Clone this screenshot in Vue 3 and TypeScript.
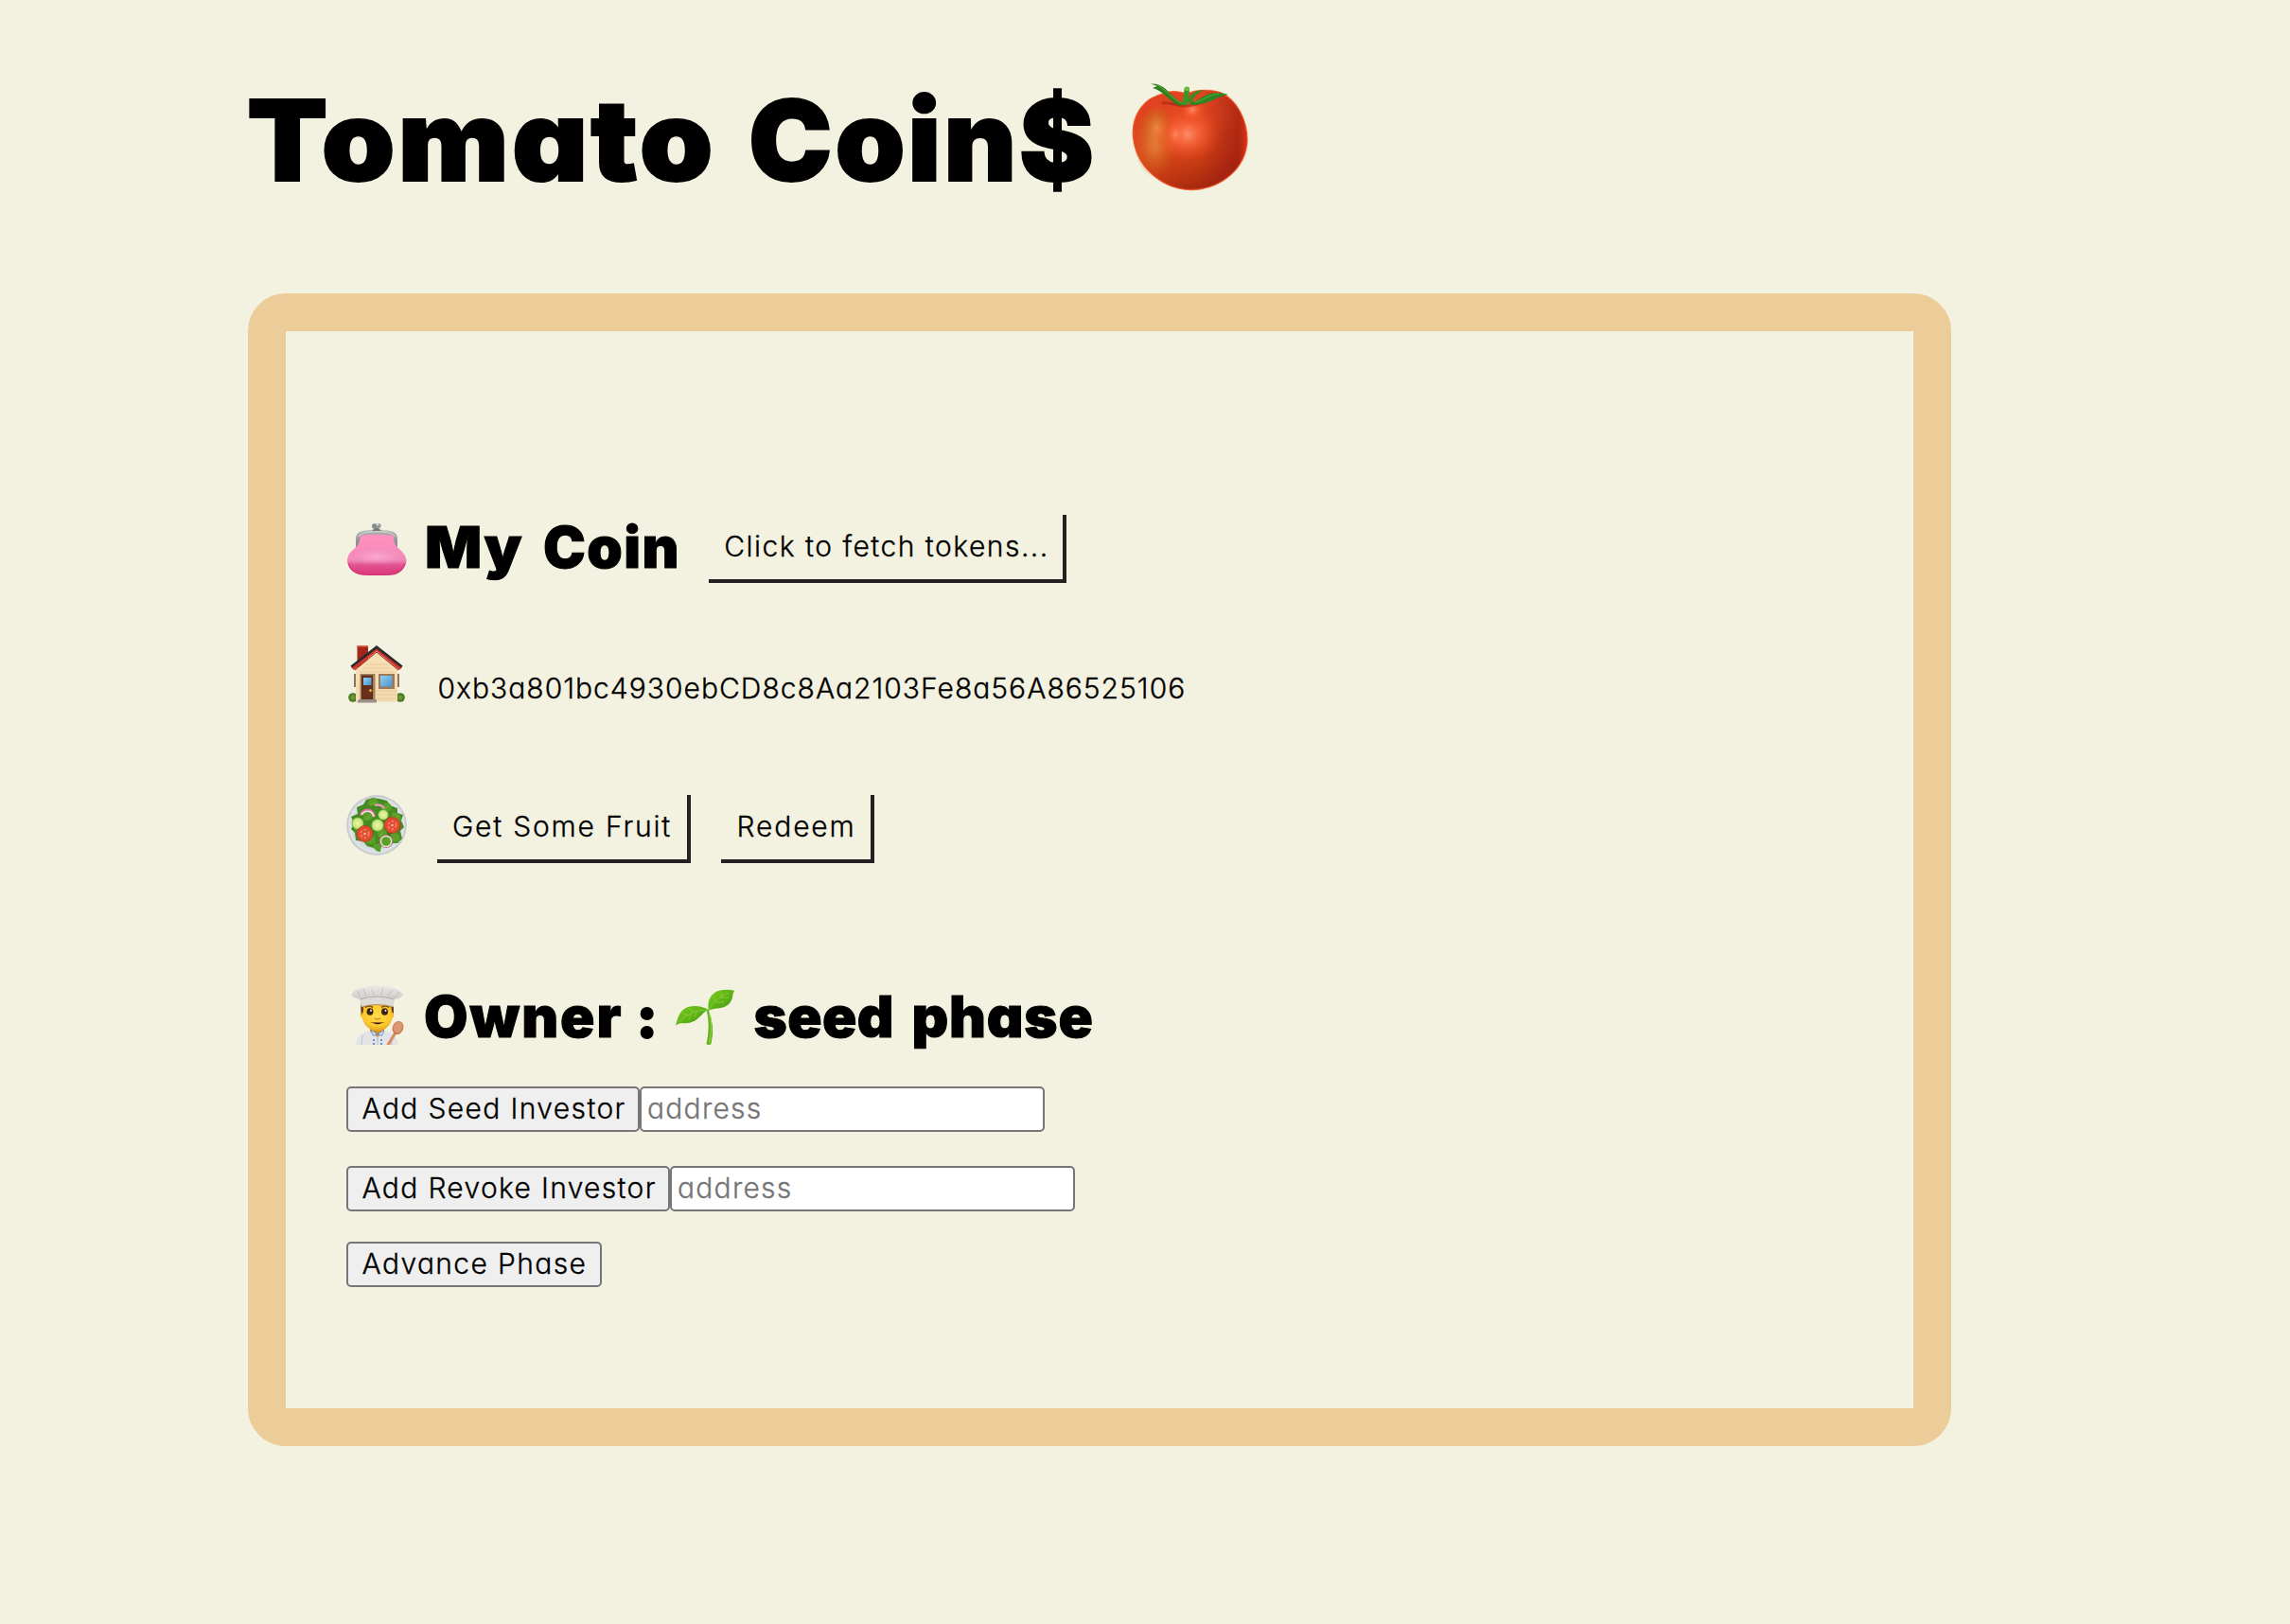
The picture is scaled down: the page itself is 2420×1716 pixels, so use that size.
<script setup lang="ts">
import { ref } from 'vue'

const seedAddress = ref('')
const revokeAddress = ref('')
const wallet = '0xb3a801bc4930ebCD8c8Aa2103Fe8a56A86525106'
</script>

<template>
  <main class="page">
    <h1 class="title">
      <span class="w-tomato">Tomato</span>
      <span class="w-coins">Coin$</span>
      <svg class="tomato" viewBox="0 0 128 128" aria-hidden="true">
        <defs>
          <linearGradient id="tBody" x1="0.2" y1="0" x2="0.65" y2="1">
            <stop offset="0" stop-color="#e2401f" />
            <stop offset="0.45" stop-color="#e04a20" />
            <stop offset="0.75" stop-color="#c43a12" />
            <stop offset="1" stop-color="#a02410" />
          </linearGradient>
          <radialGradient id="tGlow" cx="0.5" cy="0.5" r="0.5">
            <stop offset="0" stop-color="#ff9a78" />
            <stop offset="0.4" stop-color="#ff6a40" stop-opacity="0.75" />
            <stop offset="1" stop-color="#f04a20" stop-opacity="0" />
          </radialGradient>
          <radialGradient id="tGold" cx="0.5" cy="0.5" r="0.5">
            <stop offset="0" stop-color="#f29a50" />
            <stop offset="0.5" stop-color="#d87026" stop-opacity="0.7" />
            <stop offset="1" stop-color="#c85a18" stop-opacity="0" />
          </radialGradient>
          <linearGradient id="tSide" x1="0" y1="0" x2="1" y2="0">
            <stop offset="0.6" stop-color="#a01c10" stop-opacity="0" />
            <stop offset="0.92" stop-color="#a01c10" stop-opacity="0.7" />
            <stop offset="1" stop-color="#e03418" />
          </linearGradient>
        </defs>
        <path d="M36 17C44 13 52 15 60 17C70 13 86 12 96 16C114 24 124 46 124 66C123 96 96 118.500 64 118.500C34 118 6 94 3.500 62C2 38 16 21 36 17Z" fill="url(#tBody)" />
        <path d="M36 17C44 13 52 15 60 17C70 13 86 12 96 16C114 24 124 46 124 66C123 96 96 118.500 64 118.500C34 118 6 94 3.500 62C2 38 16 21 36 17Z" fill="url(#tSide)" />
        <ellipse cx="27" cy="68" rx="23" ry="38" fill="url(#tGold)" opacity=".8" />
        <ellipse cx="29" cy="53" rx="18" ry="26" fill="url(#tGold)" opacity=".75" />
        <ellipse cx="60" cy="60" rx="36" ry="30" fill="url(#tGlow)" opacity=".85" />
        <ellipse cx="66" cy="34" rx="14" ry="13" fill="url(#tGlow)" opacity=".8" />
        <ellipse cx="48" cy="60" rx="12" ry="16" fill="url(#tGlow)" opacity=".6" />
        <path d="M36 17C44 13 52 15 60 17C70 13 86 12 96 16C114 24 124 46 124 66C123 96 96 118.500 64 118.500C34 118 6 94 3.500 62C2 38 16 21 36 17Z" fill="none" stroke="#ee4a1e" stroke-width="1.500" opacity=".8" />
        <path d="M34 27C42 26 47 29 56 30C66 30 76 27 86 22" fill="none" stroke="#8e1a0c" stroke-width="3" opacity=".45" />
        <path d="M22 6.500C34 6 40 14 46 20L56 28L54 30C44 28 36 14 24 11L29 9Z" fill="#2f7d1e" />
        <path d="M30 9C38 12 44 22 54 27" fill="none" stroke="#5aa032" stroke-width="1.200" />
        <path d="M62 26C62 18 70 12 79 13.500C72 16 67 20 66 27Z" fill="#3c8a20" />
        <path d="M62 27C74 25 78 16 92 16C97 16 101 17 104 18C91 20 86 28 66 29Z" fill="#2f8322" />
        <path d="M69 26C78 24 83 18 94 17" fill="none" stroke="#5fae36" stroke-width="1" />
        <path d="M57.500 12C58 9 63 9 63 12L62 27Q58 31 54 28Q57 22 57.500 12Z" fill="#3f9228" />
        <ellipse cx="60.300" cy="11.800" rx="2.700" ry="2.300" fill="#6cbc42" />
      </svg>
    </h1>

    <section class="panel">
      <div class="row row-coin">
        <svg class="icon purse" viewBox="0 0 64 64" aria-hidden="true">
          <defs>
            <linearGradient id="pBody" x1="0" y1="0" x2="0" y2="1">
              <stop offset="0" stop-color="#ff90c0" />
              <stop offset="0.25" stop-color="#fb8dbb" />
              <stop offset="0.62" stop-color="#f08ab8" />
              <stop offset="0.76" stop-color="#e0508f" />
              <stop offset="1" stop-color="#dc3878" />
            </linearGradient>
            <linearGradient id="pMetal" x1="0" y1="0" x2="0" y2="1">
              <stop offset="0" stop-color="#c9c9c6" />
              <stop offset="0.3" stop-color="#a3a3a2" />
              <stop offset="1" stop-color="#85888a" />
            </linearGradient>
            <radialGradient id="pShine"><stop offset="0" stop-color="#ffc0dc" /><stop offset="1" stop-color="#ffa0ca" stop-opacity="0" /></radialGradient>
          </defs>
          <path d="M10 30V22C10 15 14 13.500 20 12.500Q32 10.500 44 12.500C50 13.500 54 15 54 22V30Z" fill="url(#pMetal)" />
          <path d="M12 19Q16 14 32 13.500Q48 14 52 19" fill="none" stroke="#d2d2ce" stroke-width="1.200" />
          <path d="M15 18Q32 15.500 49.500 18C50 25 52 29 57 33Q63 39 63.500 44C63 53 56 58.500 49 59.500Q32 60.500 16 59.500C7 58 1 52 1 44Q1 38 7 33C13 28 14.500 25 15 18Z" fill="url(#pBody)" />
          <ellipse cx="32" cy="40" rx="27" ry="9" fill="url(#pShine)" opacity=".6" />
          <path d="M3 47Q4 58.500 22 59.300H43Q59 58 62 47" fill="none" stroke="#c92e6d" stroke-width="1.200" opacity=".6" />
          <circle cx="29.800" cy="8" r="2.800" fill="#85888b" />
          <circle cx="34" cy="7.500" r="2.600" fill="#999b9c" />
          <path d="M27 13Q30 9 34 10L37 13Z" fill="#77797b" />
          <circle cx="33" cy="6.300" r="1.100" fill="#e1e1df" />
        </svg>
        <h2 class="heading">
          <span class="w-my">My</span>
          <span class="w-coin">Coin</span>
        </h2>
        <button class="flat fetch" type="button">Click to fetch tokens...</button>
      </div>

      <div class="row row-home">
        <svg class="icon" viewBox="0 0 64 64" aria-hidden="true">
          <defs>
            <linearGradient id="hWall" x1="0" y1="0" x2="0" y2="1"><stop offset="0" stop-color="#f9dfb5" /><stop offset="1" stop-color="#f3dab0" /></linearGradient>
            <linearGradient id="hGlass" x1="0" y1="0" x2="1" y2="1"><stop offset="0" stop-color="#8fd0f3" /><stop offset="1" stop-color="#4a92c9" /></linearGradient>
            <radialGradient id="hBush"><stop offset="0" stop-color="#7ba43c" /><stop offset="1" stop-color="#3e6f20" /></radialGradient>
          </defs>
          <circle cx="7" cy="57" r="4.800" fill="url(#hBush)" />
          <circle cx="57" cy="57" r="4.800" fill="url(#hBush)" />
          <path d="M11.500 2.500H23V18L11.500 26Z" fill="#a3261d" />
          <path d="M11.500 2.500H23V4H11.500Z" fill="#cf4a36" />
          <path d="M10 27L32 8L54 27V61.500H10Z" fill="url(#hWall)" />
          <path d="M21 22H43M17 26H47M14 30H50M12 46H15M32 50H53M32 54H53M32 58H53" stroke="#e4c593" stroke-width=".8" />
          <path d="M8 32H10V46H8ZM54 32H56V46H54Z" fill="#8b7664" />
          <path d="M5 25L32 3L59 25L56 28L32 8L8 28Z" fill="#d2362b" />
          <path d="M4.500 23.500L32 2L59.500 23.500L58 25.500L32 5.500L6 25.500Z" fill="#29282a" />
          <path d="M9 28L32 9L55 28" fill="none" stroke="#8c2119" stroke-width="1" />
          <path d="M14.500 32H30.500V59H14.500Z" fill="#a1825e" />
          <path d="M16 33.500H28V59H16Z" fill="#632c1b" />
          <path d="M18 36H26.500V44H18Z" fill="url(#hGlass)" />
          <path d="M18 48H26V56H18Z" fill="#6c301c" />
          <circle cx="25.500" cy="49.500" r="1.500" fill="#f2ae35" />
          <path d="M34 32H51V48H34Z" fill="#9a7a58" />
          <path d="M36 34H48.500V45.500H36Z" fill="url(#hGlass)" />
          <path d="M13 59H32V62.500H11.500Z" fill="#9a9088" />
        </svg>
        <span class="wallet">{{ wallet }}</span>
      </div>

      <div class="row row-fruit">
        <svg class="icon" viewBox="0 0 64 64" aria-hidden="true">
          <defs>
            <radialGradient id="sPlate"><stop offset="0.7" stop-color="#c9d2d8" /><stop offset="0.9" stop-color="#e0e5e8" /><stop offset="1" stop-color="#bcc2c2" /></radialGradient>
            <radialGradient id="sCuke"><stop offset="0.2" stop-color="#e5f2a0" /><stop offset="0.75" stop-color="#c5e77d" /><stop offset="1" stop-color="#6eac36" /></radialGradient>
          </defs>
          <circle cx="32" cy="32" r="31.700" fill="url(#sPlate)" />
          <path d="M28 3L35 4L43 6L46 11L54 14L54 19L60 21L58 27L61 34L57 38L59 46L54 51L46 51L44 55L37 54L35 60L29 56L22 54L18 49L10 48L9 40L5 36L8 30L5 23L12 20L11 13L18 10L21 5Z" fill="#458a22" />
          <path d="M24 5Q31 1 34 8Q28 14 23 10ZM41 8Q49 8 48 16Q41 20 37 14ZM49 18Q60 19 57 28Q50 29 47 24ZM48 41Q58 38 56 48Q50 52 46 47ZM20 42Q31 39 31 50Q25 55 19 49ZM7 27Q15 24 19 34Q15 40 8 36ZM17 18Q26 13 30 22Q24 30 18 26ZM33 36Q43 34 43 44Q38 49 33 43ZM28 52Q39 49 36 60Q30 61 28 52Z" fill="#5b9f29" />
          <path d="M25 11L31 7M40 16L45 11M50 26L55 22M21 26L26 20M10 34L14 29M24 48L27 44M35 44L39 39" stroke="#7fb844" stroke-width=".8" />
          <path d="M33 23Q38 18 42 25L38 30ZM17 33Q23 31 26 38L20 39ZM43 37Q49 40 45 45Z" fill="#2f6c1b" />
          <path d="M15 21Q18 14 25 16Q29 18 30 23" fill="none" stroke="#e86ca5" stroke-width="2" />
          <path d="M16 21Q19 16 25 17.500Q28 19 29 23" fill="none" stroke="#fae4ec" stroke-width="1.500" />
          <path d="M30 11Q36 9 40 14" fill="none" stroke="#ee9dc0" stroke-width="2.200" />
          <circle cx="39" cy="21" r="5.700" fill="url(#sCuke)" />
          <circle cx="12" cy="30" r="6.500" fill="url(#sCuke)" />
          <circle cx="33" cy="32" r="6.700" fill="url(#sCuke)" />
          <circle cx="42" cy="49" r="5" fill="#5b9f29" />
          <circle cx="42" cy="49" r="6.300" fill="none" stroke="#c25c80" stroke-width="1.600" />
          <circle cx="42" cy="49" r="5.600" fill="none" stroke="#dcebc0" stroke-width="1.500" />
          <g fill="#e24a31" stroke="#c8341f" stroke-width=".8"><circle cx="48.500" cy="32" r="8.400" /><circle cx="19.500" cy="41" r="8.400" /></g>
          <g fill="none" stroke="#f08a68" stroke-width="1.600" stroke-dasharray="2.600 2"><circle cx="48.500" cy="32" r="4.200" /><circle cx="19.500" cy="41" r="4.200" /></g>
          <circle cx="48.500" cy="32" r="1.300" fill="#f6b99a" /><circle cx="19.500" cy="41" r="1.300" fill="#f6b99a" />
        </svg>
        <button class="flat fruit" type="button">Get Some Fruit</button>
        <button class="flat redeem" type="button">Redeem</button>
      </div>

      <div class="row row-owner">
        <svg class="icon chef" viewBox="0 0 64 64" aria-hidden="true">
          <defs>
            <linearGradient id="cHat" x1="0" y1="0" x2="0" y2="1"><stop offset="0" stop-color="#ebeae7" /><stop offset="0.6" stop-color="#cfcecb" /><stop offset="1" stop-color="#e2e1de" /></linearGradient>
            <radialGradient id="cFace" cx=".5" cy=".4" r=".65"><stop offset="0" stop-color="#ffdc4a" /><stop offset="0.65" stop-color="#fbc62c" /><stop offset="1" stop-color="#dc951b" /></radialGradient>
            <clipPath id="cClip"><rect width="64" height="64" /></clipPath>
          </defs>
          <g clip-path="url(#cClip)">
            <path d="M10 65Q11 52 21 50L32 48L43 50Q54 52 55 65Z" fill="#e3e4e5" />
            <path d="M16 64Q16 57 18 54M48 64V58" stroke="#bfc3c8" fill="none" />
            <path d="M25 44H40V50L33 56L25 50Z" fill="#d08e1c" />
            <path d="M26 49L27.500 49L33 53L38.500 49L40 49L37.500 54.500L33 52.500L28.500 54.500Z" fill="#cfdcee" stroke="#5c85c8" stroke-width=".8" />
            <path d="M33 54V64" stroke="#b6bac0" stroke-width="1" />
            <g fill="#3f75ca"><circle cx="29" cy="59" r="1" /><circle cx="37" cy="59" r="1" /><circle cx="29" cy="63" r="1" /><circle cx="37" cy="63" r="1" /></g>
            <path d="M15 22H50V31Q51 34 48.500 36Q47 43 40 48Q33 51 26 48Q18 43 17 36Q14 34 15 30Z" fill="url(#cFace)" />
            <path d="M15 20H18V29L16 32ZM47 20H50V31L48 29Z" fill="#6b4020" />
            <path d="M20 24.500Q24 21.500 28 24.500M37 24.500Q41 21.500 45 24.500" fill="none" stroke="#81501c" stroke-width="1.600" />
            <ellipse cx="25" cy="29" rx="3.500" ry="3.800" fill="#3a2312" /><ellipse cx="40.500" cy="29" rx="3.500" ry="3.800" fill="#3a2312" />
            <circle cx="26" cy="27.800" r="1" fill="#fff" /><circle cx="41.500" cy="27.800" r="1" fill="#fff" />
            <path d="M30 36Q33 38 36 36" fill="none" stroke="#cd851b" stroke-width="1.500" />
            <path d="M25 40.500Q29 39.800 33 40.300Q37 39.800 41 40.500Q37 41.500 33 41.500Q29 41.500 25 40.500Z" fill="#8c5016" />
            <path d="M29 41H37Q33 43.500 29 41Z" fill="#251307" />
            <path d="M16 24L14.500 16Q6 14 5.500 11C8 5 13 4 19 3.500Q31-1 45 3Q55 4 60 11Q58 15 50.500 16L49.500 24Q32 18 16 24Z" fill="url(#cHat)" />
            <path d="M14.500 16Q32 9.500 50.500 16L49.500 24Q32 18.500 16 24Z" fill="#dcdbd8" />
            <path d="M14.500 16Q32 10 50.500 16" fill="none" stroke="#aaa9a5" stroke-width=".9" />
            <path d="M14 13L12 7M21 12L18 5M29 11L27 5M37 11L39 4M44 12L49 6M51 14L56 8" stroke="#b3b2ae" stroke-width=".7" />
            <path d="M16.500 24Q32 19 49 24" fill="none" stroke="#a77a35" stroke-width=".8" />
            <path d="M43 66L52 51" stroke="#d58d62" stroke-width="3.200" />
            <ellipse cx="54.500" cy="46" rx="5.700" ry="7.200" transform="rotate(20 54.500 46)" fill="#c97b50" />
            <ellipse cx="54.500" cy="45.500" rx="4.600" ry="6" transform="rotate(20 54.500 45.500)" fill="#dc9870" />
          </g>
        </svg>
        <h2 class="heading">
          <span class="w-owner">Owner</span>
          <span class="w-colon">:</span>
          <svg class="sprout" viewBox="0 0 64 64" aria-hidden="true">
            <defs>
              <linearGradient id="lLeaf" x1="0" y1="0" x2="1" y2="1"><stop offset="0" stop-color="#7ecb1c" /><stop offset="0.5" stop-color="#5fb317" /><stop offset="1" stop-color="#3f970f" /></linearGradient>
            </defs>
            <path d="M35.500 26Q43 43 38.500 62Q36 64 33.500 62Q38 43 33.500 25Z" fill="#5fb01f" />
            <path d="M36.500 30Q41 43 36.500 61" fill="none" stroke="#8fd83f" stroke-width="1.200" />
            <path d="M36 27C33 13 42 5 52 5Q58 4 63.500 6C60 8 63 16 56 21C49 26 42 23 36 27Z" fill="url(#lLeaf)" />
            <path d="M36 26C29 28 27 36 18 39C10 42 5 38 1 43C3 35 5 26 14 23Q25 20 36 26Z" fill="url(#lLeaf)" />
            <path d="M36 26Q42 14 57 8M43 18L42 12M48 13L50 8M44 18L52 18M49 13L57 13" fill="none" stroke="#8fd43e" stroke-width=".7" />
            <path d="M35 26Q19 25 4 39M21 28L15 25M14 32L9 30M24 27L21 34M17 30L15 37" fill="none" stroke="#8fd43e" stroke-width=".7" />
          </svg>
          <span class="w-seed">seed</span>
          <span class="w-phase">phase</span>
        </h2>
      </div>

      <div class="form seed-form">
        <button class="native add-seed" type="button">Add Seed Investor</button>
        <input v-model="seedAddress" class="field" placeholder="address" />
      </div>
      <div class="form revoke-form">
        <button class="native add-revoke" type="button">Add Revoke Investor</button>
        <input v-model="revokeAddress" class="field" placeholder="address" />
      </div>
      <div class="form advance-form">
        <button class="native advance" type="button">Advance Phase</button>
      </div>
    </section>
  </main>
</template>

<style>
body {
  background: #f3f1df;
}
</style>

<style scoped>
.page {
  box-sizing: border-box;
  min-height: 1716px;
  padding: 68px 0 0 262px;
  background: #f3f1df;
  color: #000;
  font-family: Inter, "Liberation Sans", sans-serif;
  font-feature-settings: "cv11";
}
.title {
  display: flex;
  align-items: flex-start;
  height: 242px;
  margin: 0;
  font-size: 118.5px;
  line-height: 160px;
  font-weight: 900;
  -webkit-text-stroke: 2px #000;
}
.title svg, .heading svg { -webkit-text-stroke: 0; }
.w-tomato {
  margin-left: -.8px;
  letter-spacing: 2.9px;
  transform: scaleX(1.05);
  transform-origin: left;
}
.w-coins { margin-left: 57.8px; letter-spacing: 2.8px; }
.tomato { width: 128px; height: 128px; margin: 14px 0 0 35.4px; }

.panel {
  box-sizing: border-box;
  width: 1800px;
  height: 1218px;
  padding: 188px 64px 0;
  border: 40px solid #eccc99;
  border-radius: 40px;
}
.row { display: flex; align-items: flex-start; }
.icon { flex: none; width: 64px; height: 64px; }
.purse { margin-top: 10px; }
.chef { margin-top: 6px; }
.heading {
  display: flex;
  align-items: flex-start;
  margin: 0;
  font-size: 60px;
  line-height: 80px;
  font-weight: 900;
  -webkit-text-stroke: 1px #000;
}
.w-my {
  margin-left: 19.1px;
  letter-spacing: 1.2px;
  transform: scaleX(1.05);
  transform-origin: left;
}
.w-coin { margin-left: 26.1px; letter-spacing: 1.5px; }
.w-owner { margin-left: 18px; letter-spacing: 2px; }
.w-colon { margin-left: 14px; -webkit-text-stroke-width: 2px; }
.sprout { width: 64px; height: 64px; margin: 7px 0 0 18.1px; }
.w-seed { margin-left: 19.5px; letter-spacing: .4px; }
.w-phase { margin-left: 18.6px; letter-spacing: .8px; }

.row-coin { height: 142px; }
.row-home { height: 160px; }
.row-fruit { height: 194px; }
.row-owner { height: 114px; }

button, .field {
  box-sizing: border-box;
  margin: 0;
  font: 360 30px/36px Inter, "Liberation Sans", sans-serif;
  font-feature-settings: "cv11";
  color: #000;
  text-align: left;
  white-space: nowrap;
  -webkit-text-stroke: .3px currentColor;
}
.flat {
  height: 72px;
  padding: 15px 0 17px 16px;
  border: solid #222;
  border-width: 0 4px 4px 0;
  background: transparent;
}
.fetch { width: 378px; margin: 6px 0 0 30.2px; letter-spacing: 1.48px; }
.fruit { width: 268px; margin-left: 32px; letter-spacing: 1.8px; }
.redeem { width: 162px; margin-left: 32px; padding-left: 16.5px; letter-spacing: 1.85px; }
.wallet {
  margin: 27px 0 0 32.5px;
  font-size: 30px;
  line-height: 40px;
  font-weight: 360;
  letter-spacing: 1.01px;
  -webkit-text-stroke: .3px #000;
}

.form { display: flex; }
.seed-form { height: 84px; }
.revoke-form { height: 80px; }
.native {
  height: 48px;
  padding: 3px 0 5px 14.5px;
  border: 2px solid #767676;
  border-radius: 5px;
  background: #efefef;
}
.add-seed { width: 310px; letter-spacing: 1.36px; }
.add-revoke { width: 342px; letter-spacing: 1.32px; }
.advance { width: 270px; letter-spacing: 1.36px; }
.field {
  width: 428px;
  height: 48px;
  padding: 2px 6px 4px;
  border: 2px solid #767676;
  border-radius: 5px;
  background: #fff;
  letter-spacing: 1.25px;
}
.field::placeholder { color: #757575; opacity: 1; -webkit-text-stroke: .3px #757575; }
</style>
